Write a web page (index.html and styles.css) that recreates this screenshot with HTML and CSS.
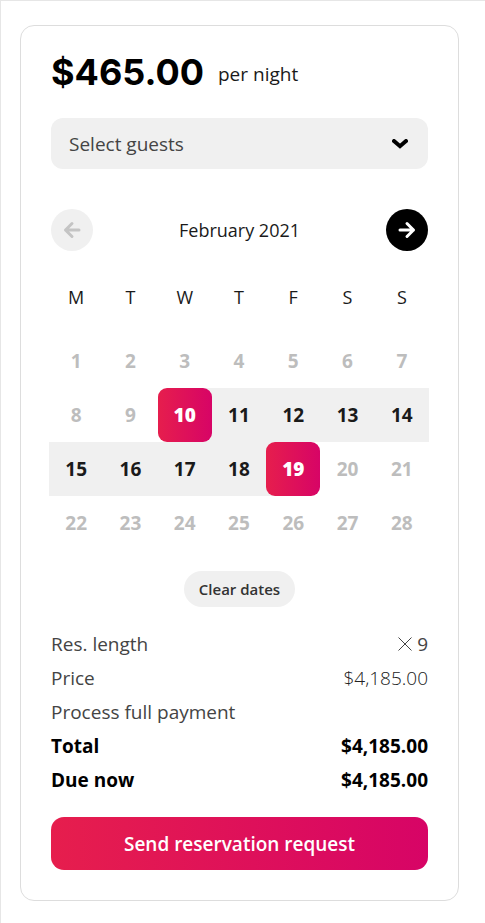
FILE: index.html
```html
<!DOCTYPE html>
<html lang="en">
<head>
  <meta charset="UTF-8" />
  <meta name="viewport" content="width=device-width, initial-scale=1.0"/>
  <title>Reservation</title>
  <link rel="stylesheet" href="styles.css">
</head>
<body>

  <form class="booking-card">
    <div class="price">
      <span class="price-amount">$465.00</span>
      <span class="price-unit">per night</span>
    </div>

    <div class="guests">
      <select id="guests" class="guests-select" aria-label="Select guests">
        <option value="">Select guests</option>
        <option value="1">1 guest</option>
        <option value="2">2 guests</option>
        <option value="3">3 guests</option>
      </select>
      <svg class="guests-arrow" viewBox="0 0 16 10" aria-hidden="true"><path d="M2 2l6 5.200 6-5.200"/></svg>
    </div>

    <div class="month-nav">
      <button type="button" class="nav-btn" aria-label="Previous month" disabled>
        <svg viewBox="0 0 20 18" aria-hidden="true"><path d="M17 9H3.500M10 2.500L3.500 9l6.500 6.500"/></svg>
      </button>
      <span class="month">February 2021</span>
      <button type="button" class="nav-btn nav-next" aria-label="Next month">
        <svg viewBox="0 0 20 18" aria-hidden="true"><path d="M3 9h13.500M10 2.500L16.500 9l-6.500 6.500"/></svg>
      </button>
    </div>

    <table class="calendar">
      <thead>
        <tr><th>M</th><th>T</th><th>W</th><th>T</th><th>F</th><th>S</th><th>S</th></tr>
      </thead>
      <tbody>
        <tr>
          <td>1</td><td>2</td><td>3</td><td>4</td><td>5</td><td>6</td><td>7</td>
        </tr>
        <tr>
          <td>8</td><td>9</td>
          <td class="start"><button type="button" class="day selected">10</button></td>
          <td class="range"><button type="button" class="day">11</button></td>
          <td class="range"><button type="button" class="day">12</button></td>
          <td class="range"><button type="button" class="day">13</button></td>
          <td class="range"><button type="button" class="day">14</button></td>
        </tr>
        <tr>
          <td class="range"><button type="button" class="day">15</button></td>
          <td class="range"><button type="button" class="day">16</button></td>
          <td class="range"><button type="button" class="day">17</button></td>
          <td class="range"><button type="button" class="day">18</button></td>
          <td class="end"><button type="button" class="day selected">19</button></td>
          <td>20</td><td>21</td>
        </tr>
        <tr>
          <td>22</td><td>23</td><td>24</td><td>25</td><td>26</td><td>27</td><td>28</td>
        </tr>
      </tbody>
    </table>

    <button type="button" class="clear-btn">Clear dates</button>

    <div class="summary">
      <div class="summary-row">
        <span>Res. length</span>
        <span class="nights"><svg viewBox="0 0 14 14" aria-hidden="true"><path d="M0.500 0.500l13 13M13.500 0.500l-13 13"/></svg>9</span>
      </div>
      <div class="summary-row"><span>Price</span><span class="light">$4,185.00</span></div>
      <div class="summary-row"><span>Process full payment</span></div>
      <div class="summary-row strong"><span>Total</span><span>$4,185.00</span></div>
      <div class="summary-row strong"><span>Due now</span><span>$4,185.00</span></div>
    </div>

    <button type="submit" class="submit-btn">Send reservation request</button>
  </form>

</body>
</html>
```

FILE: styles.css
```css
* {
  box-sizing: border-box;
}

html {
  background: #fff;
}

body {
  font-family: "Open Sans", "Noto Sans", sans-serif;
  font-size: 19px;
  min-height: 100vh;
  margin: 0;
  padding: 24px 26px 21px 19px;
  border-top: 1px solid #e6e6e6;
  border-left: 1px solid #e6e6e6;
  color: #444;
}

button, select {
  font-family: inherit;
  font-size: 19px;
  border: none;
  padding: 0;
  cursor: pointer;
}

svg {
  fill: none;
  stroke: currentColor;
}

.booking-card {
  padding: 25px 30px 30px;
  border: 1px solid #ddd;
  border-radius: 14px;
}

.price {
  display: flex;
  align-items: center;
  gap: 14px;
  height: 42px;
  margin-bottom: 25px;
  line-height: 42px;
}

.price-amount {
  font-family: Inter, "Open Sans", sans-serif;
  font-size: 36px;
  font-weight: 700;
  color: #000;
}

.price-unit {
  padding-top: 3px;
  font-weight: 500;
  color: #1a1a1a;
}

.guests {
  position: relative;
  margin-bottom: 40px;
}

.guests-select {
  display: block;
  width: 100%;
  height: 51px;
  padding: 0 50px 0 18px;
  border-radius: 12px;
  background: #f0f0f0;
  color: #444;
  appearance: none;
}

.guests-arrow {
  position: absolute;
  top: 21px;
  right: 20px;
  width: 16px;
  height: 10px;
  color: #000;
  stroke-width: 4;
  stroke-linecap: round;
  pointer-events: none;
}

.month-nav {
  display: flex;
  align-items: center;
  justify-content: space-between;
  margin-bottom: 9px;
}

.month {
  font-size: 18px;
  font-weight: 500;
  color: #1a1a1a;
}

.nav-btn {
  display: flex;
  align-items: center;
  justify-content: center;
  width: 42px;
  height: 42px;
  border-radius: 50%;
  background: #f0f0f0;
  color: #c4c4c4;
}

.nav-btn svg {
  width: 20px;
  height: 18px;
  stroke-width: 3;
  stroke-linecap: round;
  stroke-linejoin: round;
}

.nav-next {
  background: #000;
  color: #fff;
}

.calendar {
  width: calc(100% + 3px);
  margin: 0 -2px 21px;
  border-collapse: collapse;
  table-layout: fixed;
}

.calendar th {
  height: 74px;
  padding: 0;
  font-size: 18px;
  font-weight: 500;
  color: #1a1a1a;
}

.calendar td {
  height: 54px;
  padding: 0;
  text-align: center;
  font-weight: 700;
  color: #bdbdbd;
}

.calendar .range {
  background: #f0f0f0;
}

.calendar .start {
  background: linear-gradient(to right, #fff 50%, #f0f0f0 50%);
}

.calendar .end {
  background: linear-gradient(to right, #f0f0f0 50%, #fff 50%);
}

.day {
  display: block;
  width: 100%;
  height: 54px;
  background: none;
  font-weight: 700;
  color: #1a1a1a;
}

.day.selected {
  border-radius: 9px;
  background: linear-gradient(to right, #e61e4d, #d70466);
  font-weight: 800;
  color: #fff;
}

.clear-btn {
  display: block;
  height: 36px;
  margin: 0 auto 20px;
  padding: 0 15px;
  border-radius: 18px;
  background: #f0f0f0;
  font-size: 15px;
  font-weight: 600;
  color: #333;
}

.summary {
  margin-bottom: 20px;
}

.summary-row {
  display: flex;
  justify-content: space-between;
  line-height: 34px;
}

.summary-row.strong {
  font-weight: 700;
  color: #000;
}

.light {
  font-weight: 300;
  color: #222;
}

.nights {
  display: flex;
  align-items: center;
  gap: 5px;
}

.nights svg {
  width: 14px;
  height: 14px;
}

.submit-btn {
  display: block;
  width: 100%;
  height: 53px;
  border-radius: 13px;
  background: linear-gradient(to right, #e61e4d, #d70466);
  font-weight: 600;
  color: #fff;
}
```
